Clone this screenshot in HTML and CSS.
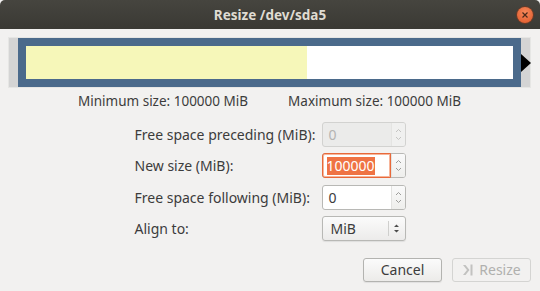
FILE: index.html
```html
<!DOCTYPE html>
<html lang="en">
<head>
    <meta charset="UTF-8">
    <meta name="viewport" content="width=device-width, initial-scale=1.0">
    <title>Resize /dev/sda5</title>
    <link rel="stylesheet" href="styles.css">
</head>
<body>

    <div class="window">
        <!-- Title bar -->
        <div class="titlebar">
            <span class="title">Resize /dev/sda5</span>
            <span class="close">
                <svg width="6" height="6" viewBox="0 0 6 6"><path d="M0.5 0.5 L5.5 5.5 M5.5 0.5 L0.5 5.5" stroke="#4a2a1a" stroke-width="1.2"/></svg>
            </span>
        </div>

        <div class="content">
            <!-- Partition graph -->
            <div class="graph">
                <div class="partition">
                    <div class="used" style="width: 57.8%"></div>
                </div>
                <span class="handle"></span>
            </div>

            <div class="limits">
                <span>Minimum size: 100000 MiB</span>
                <span>Maximum size: 100000 MiB</span>
            </div>

            <!-- Form -->
            <div class="form">
                <label>Free space preceding (MiB):</label>
                <div class="spin disabled">
                    <span class="value">0</span>
                    <span class="arrows">
                        <svg width="7" height="13" viewBox="0 0 7 13"><path d="M1 4 L3.5 1.5 L6 4 M1 9 L3.5 11.5 L6 9" fill="none" stroke="#c4c4c2" stroke-width="1"/></svg>
                    </span>
                </div>

                <label>New size (MiB):</label>
                <div class="spin focused">
                    <span class="value"><span class="selected">100000</span></span>
                    <span class="arrows">
                        <svg width="7" height="13" viewBox="0 0 7 13"><path d="M1 4 L3.5 1.5 L6 4 M1 9 L3.5 11.5 L6 9" fill="none" stroke="#9c9c9a" stroke-width="1"/></svg>
                    </span>
                </div>

                <label>Free space following (MiB):</label>
                <div class="spin">
                    <span class="value">0</span>
                    <span class="arrows">
                        <svg width="7" height="13" viewBox="0 0 7 13"><path d="M1 4 L3.5 1.5 L6 4 M1 9 L3.5 11.5 L6 9" fill="none" stroke="#9c9c9a" stroke-width="1"/></svg>
                    </span>
                </div>

                <label>Align to:</label>
                <div class="combo">
                    <span class="value">MiB</span>
                    <span class="sep"></span>
                    <span class="arrows">
                        <svg width="7" height="13" viewBox="0 0 7 13"><path d="M1 5 L3.5 2.5 L6 5 Z M1 8 L3.5 10.5 L6 8 Z" fill="#4c4c4c"/></svg>
                    </span>
                </div>
            </div>

            <!-- Buttons -->
            <div class="buttons">
                <button class="btn">Cancel</button>
                <button class="btn" disabled>
                    <svg width="12" height="14" viewBox="0 0 12 14"><path d="M1 2 L5 7 L1 12 L3.5 12 L7.5 7 L3.5 2 Z" fill="#c2c2c0"/><rect x="8.5" y="1.5" width="2" height="11" fill="#c2c2c0"/></svg>
                    Resize
                </button>
            </div>
        </div>
    </div>

</body>
</html>
```

FILE: styles.css
```css
body {
    margin: 0;
    background: #ffffff;
    font-family: "Noto Sans", "DejaVu Sans", sans-serif;
    font-size: 14px;
    color: #3c3c3c;
}
.window {
    width: 540px;
    height: 291px;
    background: #f2f1f0;
    overflow: hidden;
}
.titlebar {
    height: 29px;
    background: linear-gradient(#46453f, #3a3934);
    border-radius: 5px 5px 0 0;
    display: flex;
    align-items: center;
    justify-content: center;
    position: relative;
}
.title {
    color: #dfdbd2;
    font-weight: bold;
    font-size: 13.5px;
}
.close {
    position: absolute;
    right: 7px;
    top: 7px;
    width: 16px;
    height: 16px;
    border-radius: 50%;
    background: radial-gradient(circle at 50% 35%, #f68a5c, #df5526);
    box-shadow: 0 0 0 1px #6a3a26;
    display: flex;
    align-items: center;
    justify-content: center;
}
.content {
    padding: 8px 9px 0 8px;
}
.graph {
    height: 49px;
    border: 1px solid #e6e6e4;
    background: #d4d4d4;
    padding: 0 9px 0 9px;
    position: relative;
}
.partition {
    height: 33px;
    border: 8px solid #4b6a8b;
    background: #ffffff;
    display: flex;
}
.used {
    background: #f6f7b9;
}
.handle {
    position: absolute;
    right: -1px;
    top: 16px;
    width: 0;
    height: 0;
    border-top: 9px solid transparent;
    border-bottom: 9px solid transparent;
    border-left: 10px solid #000000;
}
.limits {
    display: flex;
    justify-content: center;
    gap: 40px;
    margin-top: 4px;
    height: 18px;
    line-height: 18px;
    font-size: 13.5px;
}
.form {
    display: grid;
    grid-template-columns: 187px 84px;
    justify-content: center;
    row-gap: 6.3px;
    margin-top: 12px;
    margin-left: 1px;
}
.form label {
    display: flex;
    align-items: center;
    height: 25px;
}
.spin, .combo {
    height: 25px;
    box-sizing: border-box;
    border: 1px solid #b8b8b5;
    border-radius: 3px;
    background: #ffffff;
    display: flex;
    align-items: center;
}
.spin .value {
    flex: 1;
    padding-left: 6px;
    line-height: 21px;
}
.spin .arrows {
    width: 13px;
    height: 23px;
    display: flex;
    align-items: center;
    justify-content: center;
    background: linear-gradient(#fafafa, #eeeeec);
    border-left: 1px solid #e2e2e0;
    border-radius: 0 2px 2px 0;
}
.spin.disabled {
    background: #ebebea;
    border-color: #d2d2d0;
    color: #b4b4b2;
}
.spin.disabled .arrows {
    background: #f0f0ef;
    border-left-color: #e4e4e2;
}
.spin.focused .value {
    align-self: stretch;
    display: flex;
    align-items: center;
    margin: -1px 0 -1px -1px;
    padding-left: 4px;
    border: 1px solid #e8693a;
    border-radius: 3px 0 0 3px;
    box-shadow: inset 0 0 0 1px #f7b59a;
}
.selected {
    background: #ef7344;
    color: #ffffff;
    line-height: 18px;
}
.combo {
    background: linear-gradient(#fbfbfb, #ecebea);
    box-shadow: 0 1px 1px rgba(0, 0, 0, 0.08);
}
.combo .value {
    flex: 1;
    padding-left: 8px;
}
.combo .sep {
    width: 1px;
    height: 15px;
    background: #cfcfcd;
}
.combo .arrows {
    width: 16px;
    display: flex;
    justify-content: center;
}
.buttons {
    display: flex;
    justify-content: flex-end;
    gap: 10px;
    margin-top: 17px;
}
.btn {
    width: 79px;
    height: 24px;
    box-sizing: border-box;
    border: 1px solid #b3b3b0;
    border-radius: 3px;
    background: linear-gradient(#fbfbfb, #ecebe9);
    box-shadow: 0 1px 1px rgba(0, 0, 0, 0.07);
    font-family: inherit;
    font-size: 14px;
    color: #3c3c3c;
    display: flex;
    align-items: center;
    justify-content: center;
    gap: 5px;
    padding: 0;
}
.btn:disabled {
    color: #b0b0ae;
    border-color: #d4d4d2;
    background: #f2f1f0;
    box-shadow: none;
}
```
